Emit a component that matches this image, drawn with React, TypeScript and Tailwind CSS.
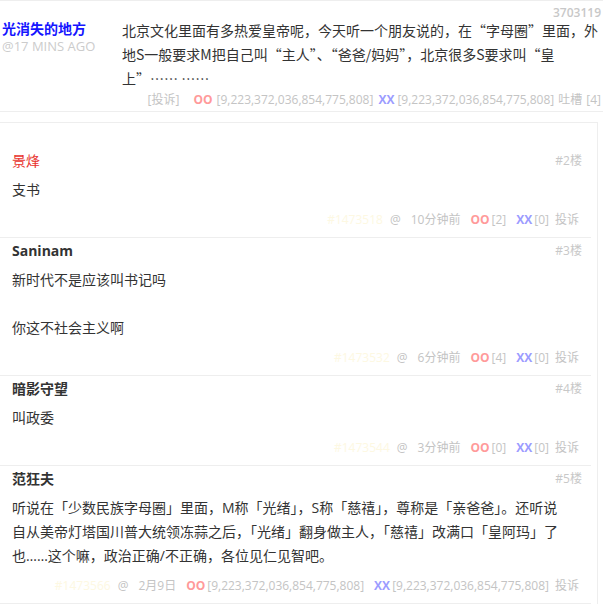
import React from "react";

type Comment = {
  floor: number;
  name: string;
  red?: boolean;
  lines: string[];
  id: string;
  time: string;
  oo: string;
  xx: string;
};

const BIG = "[9,223,372,036,854,775,808]";

const comments: Comment[] = [
  {
    floor: 2,
    name: "景烽",
    red: true,
    lines: ["支书"],
    id: "#1473518",
    time: "10分钟前",
    oo: "[2]",
    xx: "[0]",
  },
  {
    floor: 3,
    name: "Saninam",
    lines: ["新时代不是应该叫书记吗", "", "你这不社会主义啊"],
    id: "#1473532",
    time: "6分钟前",
    oo: "[4]",
    xx: "[0]",
  },
  {
    floor: 4,
    name: "暗影守望",
    lines: ["叫政委"],
    id: "#1473544",
    time: "3分钟前",
    oo: "[0]",
    xx: "[0]",
  },
  {
    floor: 5,
    name: "范狂夫",
    lines: [
      "听说在「少数民族字母圈」里面，M称「光绪」，S称「慈禧」，尊称是「亲爸爸」。还听说",
      "自从美帝灯塔国川普大统领冻蒜之后，「光绪」翻身做主人，「慈禧」改满口「皇阿玛」了",
      "也……这个嘛，政治正确/不正确，各位见仁见智吧。",
    ],
    id: "#1473566",
    time: "2月9日",
    oo: BIG,
    xx: BIG,
  },
];

const CommentItem: React.FC<{ c: Comment }> = ({ c }) => (
  <div className="mr-[6px] border-b border-[#eeeeee] pb-[7px] pl-[12px] pr-[9px] pt-[3px]">
    {/* name + floor */}
    <div className="flex items-center justify-between leading-[20px]">
      <span
        className={
          c.red
            ? "text-[14px] text-[#e8322c]"
            : "text-[14px] font-bold text-[#333333]"
        }
      >
        {c.name}
      </span>
      <span className="text-[12px] text-[#c8c8c8]">#{c.floor}楼</span>
    </div>

    {/* body */}
    <div className="mt-[7px] text-[14px] leading-[24px] text-[#333333]">
      {c.lines.map((l, i) => (
        <div key={i} className="h-[24px] whitespace-nowrap">
          {l}
        </div>
      ))}
    </div>

    {/* footer */}
    <div className="mt-2 flex items-center justify-end pr-[3px] text-[12px] leading-[20px] text-[#c4c4c4]">
      <span className="mr-[7px] text-[#fdf8e2]">{c.id}</span>
      <span className="mr-[10px]">@</span>
      <span className="mr-[10px]">{c.time}</span>
      <span className="mr-[2px] font-bold text-[#ff9a9a]">OO</span>
      <span className="mr-[10px]">{c.oo}</span>
      <span className="mr-[2px] font-bold text-[#9c9cff]">XX</span>
      <span className="mr-[6px]">{c.xx}</span>
      <span>投诉</span>
    </div>
  </div>
);

export default function App() {
  return (
    <div className="min-h-screen w-[603px] bg-white font-['Open_Sans','Noto_Sans_CJK_SC',sans-serif]">
      {/* main post */}
      <div className="border-b border-t border-[#eeeeee] pb-[1px]">
        <div className="mt-[7px] pr-[2px] text-right text-[12px] font-semibold leading-[10px] text-[#c8c8c8]">
          3703119
        </div>
        <div className="flex">
          <div className="w-[122px] shrink-0 pl-[2px]">
            <div className="mt-[1px] text-[14px] font-bold leading-[20px] text-[#1515ff]">
              光消失的地方
            </div>
            <div className="text-[13px] leading-[14px] text-[#cccccc]">
              @17 MINS AGO
            </div>
          </div>
          <div className="flex-1 font-['Noto_Sans_CJK_SC',sans-serif] text-[14px] leading-[24px] text-[#333333]">
            北京文化里面有多热爱皇帝呢，今天听一个朋友说的，在“字母圈”里面，外
            <br />
            地S一般要求M把自己叫“主人”、“爸爸/妈妈”，北京很多S要求叫“皇
            <br />
            上”…… ……
          </div>
        </div>
        <div className="flex items-center justify-end pr-[2px] text-[12px] leading-[20px] text-[#c4c4c4]">
          <span className="mr-[14px]">[投诉]</span>
          <span className="mr-[4px] font-bold text-[#ff9a9a]">OO</span>
          <span className="mr-[5px]">{BIG}</span>
          <span className="mr-[3px] font-bold text-[#9c9cff]">XX</span>
          <span className="mr-[4px]">{BIG}</span>
          <span className="mr-[4px]">吐槽</span>
          <span>[4]</span>
        </div>
      </div>

      {/* comments box */}
      <div className="mt-[10px] w-[598px] border-r border-t border-[#eeeeee] pt-[25px]">
        {comments.map((c) => (
          <CommentItem key={c.floor} c={c} />
        ))}
      </div>
    </div>
  );
}
